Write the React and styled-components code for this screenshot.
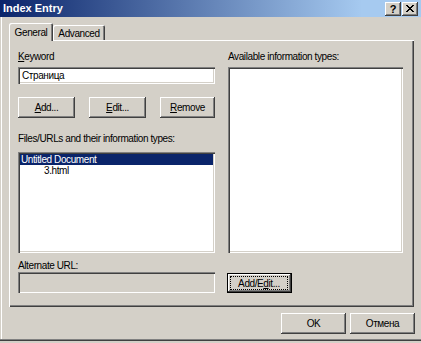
import React from 'react';
import styled, { createGlobalStyle, css } from 'styled-components';

const FACE = '#D4D0C8';

const GlobalStyle = createGlobalStyle`
  html, body { margin: 0; padding: 0; background: ${FACE}; }
  body { font-family: "Liberation Sans", Arial, sans-serif; }
  * { box-sizing: border-box; }
`;

const Window = styled.div`
  width: 421px;
  height: 343px;
  display: flex;
  flex-direction: column;
  background: ${FACE};
  font: 10px/13px "Liberation Sans", Arial, sans-serif;
  letter-spacing: -0.4px;
  color: #000;
  overflow: hidden;
`;

const TitleBar = styled.div`
  height: 17px;
  flex: none;
  display: flex;
  align-items: center;
  padding: 0 3px 0 3px;
  background: linear-gradient(to right, #0A246A 0%, #A6CAF0 86%, #A6CAF0 100%);
`;

const Title = styled.div`
  flex: 1;
  color: #fff;
  font: bold 11px/17px "Liberation Sans", Arial, sans-serif;
  letter-spacing: 0;
`;

const CaptionButton = styled.div`
  width: 16px;
  height: 14px;
  margin-left: ${p => p.$gap || 0}px;
  background: ${FACE};
  box-shadow: inset -1px -1px #404040, inset 1px 1px #fff, inset -2px -2px #808080;
  display: flex;
  align-items: center;
  justify-content: center;
  font: bold 11px/14px "Liberation Sans", Arial, sans-serif;
  letter-spacing: 0;
  color: #000;
`;

const Body = styled.div`
  flex: 1;
  display: flex;
  flex-direction: column;
  padding: 6px 7px 0 9px;
  box-shadow: inset 0 -2px ${FACE}, inset 0 -3px #404040, inset 0 -4px #808080,
    inset 1px 0 ${FACE}, inset 2px 0 #fff;
`;

const TabRow = styled.div`
  display: flex;
  align-items: flex-end;
  height: 17px;
  flex: none;
`;

const Tab = styled.div`
  position: relative;
  z-index: ${p => (p.$active ? 2 : 1)};
  width: ${p => p.$w}px;
  height: ${p => (p.$active ? 18 : 15)}px;
  margin-bottom: ${p => (p.$active ? -1 : 0)}px;
  padding-top: ${p => (p.$active ? 3 : 2)}px;
  text-align: center;
  background: ${FACE};
  border-radius: 2px 2px 0 0;
  box-shadow: inset 1px 1px #fff, inset -1px 0 #404040, inset -2px 0 #808080;
`;

const Panel = styled.div`
  height: 267px;
  flex: none;
  display: grid;
  grid-template-columns: 197px 175px;
  column-gap: 13px;
  align-content: start;
  padding: 10px 0 0 9px;
  box-shadow: inset 1px 1px #fff, inset -1px -1px #404040, inset -2px -2px #808080;
`;

const Label = styled.div`
  grid-column: ${p => p.$col || 1};
  margin-top: ${p => p.$mt || 0}px;
  height: 13px;
  white-space: nowrap;
`;

const sunken = css`
  box-shadow: inset 1px 1px #808080, inset 2px 2px #404040, inset -1px -1px #fff,
    inset -2px -2px ${FACE};
`;

const Field = styled.div`
  grid-column: 1;
  margin-top: ${p => p.$mt || 0}px;
  height: ${p => p.$h}px;
  background: ${p => (p.$disabled ? FACE : '#fff')};
  ${sunken};
  display: flex;
  align-items: center;
  padding: 0 4px;
  white-space: nowrap;
`;

const ListBox = styled.div`
  grid-column: ${p => p.$col || 1};
  grid-row: ${p => p.$row || 'auto'};
  margin-top: ${p => p.$mt || 0}px;
  height: ${p => (p.$h ? `${p.$h}px` : 'auto')};
  background: #fff;
  ${sunken};
  padding: 2px;
  overflow: hidden;
`;

const ListItem = styled.div`
  height: 11px;
  line-height: 11px;
  padding-left: ${p => p.$indent || 1}px;
  white-space: nowrap;
  ${p =>
    p.$selected &&
    css`
      background: #0A246A;
      color: #fff;
    `}
`;

const ButtonRow = styled.div`
  grid-column: 1;
  margin-top: ${p => p.$mt || 0}px;
  display: grid;
  grid-template-columns: 57px 57px 55px;
  justify-content: space-between;
`;

const Button = styled.div`
  width: ${p => (p.$w ? `${p.$w}px` : 'auto')};
  height: ${p => p.$h || 21}px;
  margin-top: ${p => p.$mt || 0}px;
  margin-left: ${p => p.$ml || 0}px;
  grid-column: ${p => p.$col || 'auto'};
  background: ${FACE};
  display: flex;
  align-items: center;
  justify-content: center;
  white-space: nowrap;
  box-shadow: inset -1px -1px #404040, inset 1px 1px #fff, inset -2px -2px #808080;
  ${p =>
    p.$default &&
    css`
      box-shadow: inset 0 0 0 1px #000, inset -2px -2px #404040, inset 2px 2px #fff,
        inset -3px -3px #808080;
      align-items: stretch;
      justify-content: stretch;
      padding: 3px 4px 3px 3px;
    `}
`;

const FocusRing = styled.span`
  flex: 1;
  display: flex;
  align-items: center;
  justify-content: center;
  border: 1px dotted #000;
`;

const Footer = styled.div`
  display: flex;
  justify-content: flex-end;
  gap: 4px;
  margin: 6px -1px 0 0;
`;

const U = styled.u`
  text-decoration: underline;
  text-underline-offset: 1px;
`;

const CloseGlyph = () => (
  <svg width="8" height="7" viewBox="0 0 8 7" shapeRendering="crispEdges">
    <path
      fill="#000"
      d="M0 0h2v1h-2zM6 0h2v1h-2zM1 1h2v1h-2zM5 1h2v1h-2zM2 2h4v1h-4zM3 3h2v1h-2zM2 4h4v1h-4zM1 5h2v1h-2zM5 5h2v1h-2zM0 6h2v1h-2zM6 6h2v1h-2z"
    />
  </svg>
);

export default function App() {
  return (
    <>
      <GlobalStyle />
      <Window>
        <TitleBar>
          <Title>Index Entry</Title>
          <CaptionButton>?</CaptionButton>
          <CaptionButton $gap={1}>
            <CloseGlyph />
          </CaptionButton>
        </TitleBar>
        <Body>
          <TabRow>
            <Tab $active $w={44}>General</Tab>
            <Tab $w={52}>Advanced</Tab>
          </TabRow>
          <Panel>
            <Label>
              <U>K</U>eyword
            </Label>
            <Label $col={2}>Available information types:</Label>
            <Field $mt={4} $h={17}>Страница</Field>
            <ListBox $col={2} $row="2 / 6" $mt={4} />
            <ButtonRow $mt={13}>
              <Button>
                <U>A</U>dd...
              </Button>
              <Button>
                <U>E</U>dit...
              </Button>
              <Button>
                <U>R</U>emove
              </Button>
            </ButtonRow>
            <Label $mt={14}>Files/URLs and their information types:</Label>
            <ListBox $mt={7} $h={101}>
              <ListItem $selected>Untitled Document</ListItem>
              <ListItem $indent={24}>3.html</ListItem>
            </ListBox>
            <Label $mt={6}>Alternate URL:</Label>
            <Field $h={21} $disabled />
            <Button $col={2} $default $w={65} $h={20} $mt={1} $ml={-1}>
              <FocusRing>
                Add/E<U>d</U>it...
              </FocusRing>
            </Button>
          </Panel>
          <Footer>
            <Button $w={65}>OK</Button>
            <Button $w={65}>Отмена</Button>
          </Footer>
        </Body>
      </Window>
    </>
  );
}
